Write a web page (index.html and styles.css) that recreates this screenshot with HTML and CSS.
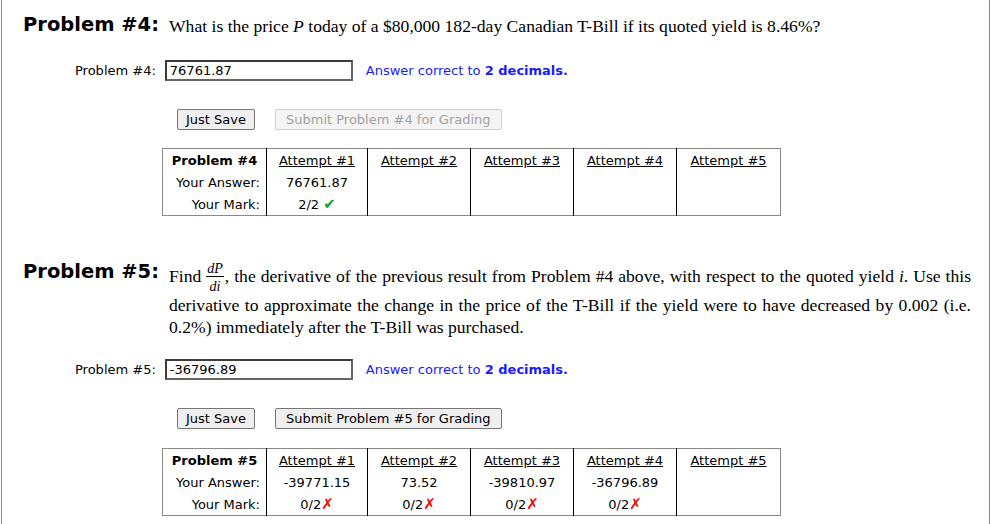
FILE: index.html
```html
<!DOCTYPE html>
<html>
<head>
  <title>T-Bill Problems</title>
  <link rel="stylesheet" href="styles.css">
</head>
<body>
  <div class="page">
    <!-- Problem 4 -->
    <div class="problem">
      <div class="problem-head">
        <div class="ptitle">Problem #4:</div>
        <div class="question">What is the price <i>P</i> today of a $80,000 182-day Canadian T-Bill if its quoted yield is 8.46%?</div>
      </div>
      <div class="answer-row">
        <label class="answer-label">Problem #4:</label>
        <input class="answer-input" type="text" value="76761.87">
        <span class="hint">Answer correct to <b>2 decimals.</b></span>
      </div>
      <div class="button-row">
        <button class="btn">Just Save</button>
        <button class="btn wide" disabled>Submit Problem #4 for Grading</button>
      </div>
      <table class="attempts">
        <colgroup>
          <col class="c-head"><col class="c-1"><col class="c-n"><col class="c-n"><col class="c-n"><col class="c-last">
        </colgroup>
        <tr>
          <th class="rowhead">Problem #4</th>
          <th><u>Attempt #1</u></th>
          <th><u>Attempt #2</u></th>
          <th><u>Attempt #3</u></th>
          <th><u>Attempt #4</u></th>
          <th><u>Attempt #5</u></th>
        </tr>
        <tr>
          <td class="rowhead">Your Answer:</td>
          <td>76761.87</td><td></td><td></td><td></td><td></td>
        </tr>
        <tr>
          <td class="rowhead">Your Mark:</td>
          <td>2/2 <span class="ok">&#10004;</span></td><td></td><td></td><td></td><td></td>
        </tr>
      </table>
    </div>

    <!-- Problem 5 -->
    <div class="problem second">
      <div class="problem-head">
        <div class="ptitle">Problem #5:</div>
        <div class="question">Find <span class="frac"><span class="num">dP</span><span class="den">di</span></span>, the derivative of the previous result from Problem #4 above, with respect to the quoted yield <i>i</i>. Use this derivative to approximate the change in the price of the T-Bill if the yield were to have decreased by 0.002 (i.e. 0.2%) immediately after the T-Bill was purchased.</div>
      </div>
      <div class="answer-row">
        <label class="answer-label">Problem #5:</label>
        <input class="answer-input" type="text" value="-36796.89">
        <span class="hint">Answer correct to <b>2 decimals.</b></span>
      </div>
      <div class="button-row">
        <button class="btn">Just Save</button>
        <button class="btn wide">Submit Problem #5 for Grading</button>
      </div>
      <table class="attempts">
        <colgroup>
          <col class="c-head"><col class="c-1"><col class="c-n"><col class="c-n"><col class="c-n"><col class="c-last">
        </colgroup>
        <tr>
          <th class="rowhead">Problem #5</th>
          <th><u>Attempt #1</u></th>
          <th><u>Attempt #2</u></th>
          <th><u>Attempt #3</u></th>
          <th><u>Attempt #4</u></th>
          <th><u>Attempt #5</u></th>
        </tr>
        <tr>
          <td class="rowhead">Your Answer:</td>
          <td>-39771.15</td><td>73.52</td><td>-39810.97</td><td>-36796.89</td><td></td>
        </tr>
        <tr>
          <td class="rowhead">Your Mark:</td>
          <td>0/2<span class="bad">&#10007;</span></td>
          <td>0/2<span class="bad">&#10007;</span></td>
          <td>0/2<span class="bad">&#10007;</span></td>
          <td>0/2<span class="bad">&#10007;</span></td>
          <td></td>
        </tr>
      </table>
    </div>
  </div>
</body>
</html>
```

FILE: styles.css
```css
body {
  margin: 0;
  font-family: "DejaVu Sans", Verdana, sans-serif;
  font-size: 13px;
  color: #000;
  background: #fff;
}
.page {
  margin-left: 1px;
  width: 989px;
  min-height: 524px;
  border-left: 1px solid #8a8a8a;
  border-right: 1px solid #8a8a8a;
  padding-top: 15px;
  box-sizing: border-box;
}
.problem-head {
  display: flex;
  align-items: flex-start;
  padding-left: 21px;
}
.ptitle {
  width: 146px;
  flex-shrink: 0;
  font-size: 19.5px;
  line-height: 20px;
  font-weight: bold;
}
.question {
  width: 802px;
  font-family: "Liberation Serif", "Times New Roman", serif;
  font-size: 17.6px;
  line-height: 22px;
  text-align: justify;
}
.frac {
  display: inline-block;
  vertical-align: -9px;
  font-size: 14px;
  font-style: italic;
  text-align: center;
  margin-right: 1px;
}
.frac .num {
  display: block;
  line-height: 14px;
  border-bottom: 1px solid #000;
  padding: 0 1px;
}
.frac .den {
  display: block;
  line-height: 14px;
  padding-top: 3px;
}
.answer-row {
  display: flex;
  align-items: center;
  margin-top: 23px;
  padding-left: 73px;
}
.answer-label {
  margin-right: 9px;
}
.answer-input {
  width: 188px;
  height: 21px;
  box-sizing: border-box;
  padding: 0 3px;
  border: 2px solid #666;
  border-top-color: #3c3c3c;
  border-left-color: #3c3c3c;
  font-family: "DejaVu Sans", Verdana, sans-serif;
  font-size: 13px;
  color: #000;
}
.hint {
  margin-left: 13px;
  color: #1a1aff;
}
.button-row {
  display: flex;
  gap: 20px;
  margin-top: 28px;
  padding-left: 175px;
}
.btn {
  height: 21px;
  padding: 0 8px;
  font-family: "DejaVu Sans", Verdana, sans-serif;
  font-size: 13px;
  color: #000;
  background: #efefef;
  border: 1px solid #767676;
  border-radius: 2px;
}
.btn.wide {
  padding: 0 10px;
}
.btn:disabled {
  color: #a3a3a3;
  background: #f4f4f4;
  border-color: #cfcfcf;
}
.attempts {
  margin: 18px 0 0 160px;
  border-collapse: collapse;
  border: 1px solid #8a8a8a;
  table-layout: fixed;
  width: 618px;
}
.attempts .c-head { width: 104px; }
.attempts .c-1 { width: 101px; }
.attempts .c-n { width: 103px; }
.attempts .c-last { width: 104px; }
.attempts th,
.attempts td {
  height: 22px;
  padding: 0;
  text-align: center;
  border-left: 1px solid #000;
}
.attempts th {
  font-weight: normal;
}
.attempts .rowhead {
  border-left: none;
  text-align: right;
  padding-right: 6px;
}
.attempts th.rowhead {
  font-weight: bold;
  text-align: center;
  padding-right: 0;
}
.ok {
  color: #1c9a1c;
  font-weight: bold;
  font-size: 15px;
  line-height: 13px;
}
.bad {
  color: #ff0000;
  font-weight: bold;
  font-size: 15px;
  line-height: 13px;
}
.second {
  margin-top: 46px;
}
.second .answer-row {
  margin-top: 21px;
}
.second .attempts {
  margin-top: 19px;
}
```
